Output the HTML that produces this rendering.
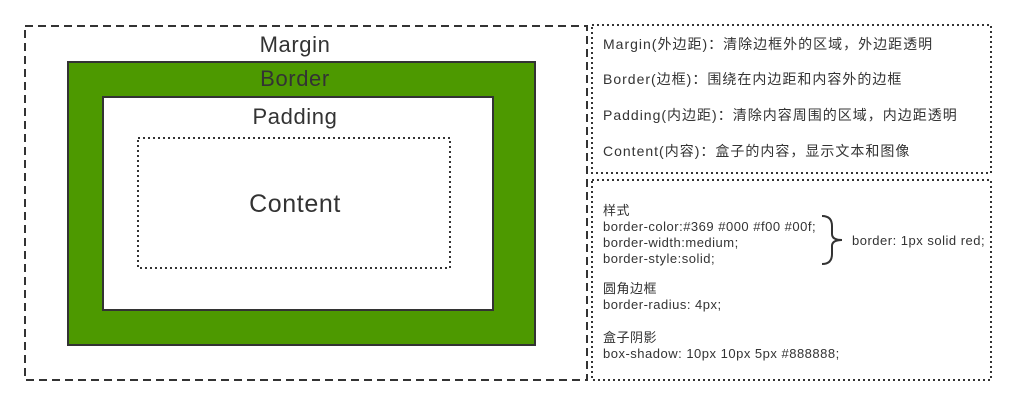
<!DOCTYPE html>
<html><head><meta charset="utf-8"><style>
html,body{margin:0;padding:0;background:#fff;width:1016px;height:406px;overflow:hidden}
text{font-family:"Liberation Sans","Noto Sans CJK SC",sans-serif;fill:#333}
</style></head><body>
<svg width="1016" height="406" viewBox="0 0 1016 406" xmlns="http://www.w3.org/2000/svg">
<rect x="25" y="26" width="562" height="354" fill="none" stroke="#333" stroke-width="2" stroke-dasharray="8 5"/>
<rect x="68" y="62" width="467" height="283" fill="#4d9900" stroke="#333" stroke-width="2"/>
<rect x="103" y="97" width="390" height="213" fill="#fff" stroke="#333" stroke-width="2"/>
<rect x="138" y="138" width="312" height="130" fill="none" stroke="#333" stroke-width="2" stroke-dasharray="2 3"/>
<text x="295" y="52" font-size="22" letter-spacing="0.6" text-anchor="middle">Margin</text>
<text x="295" y="86" font-size="22" letter-spacing="0.6" text-anchor="middle">Border</text>
<text x="295" y="124" font-size="22" letter-spacing="0.6" text-anchor="middle">Padding</text>
<text x="295" y="212" font-size="25" letter-spacing="0.6" text-anchor="middle">Content</text>
<rect x="592" y="25" width="399" height="148" fill="none" stroke="#333" stroke-width="2" stroke-dasharray="2 3"/>
<rect x="592" y="180" width="399" height="200" fill="none" stroke="#333" stroke-width="2" stroke-dasharray="2 3"/>
<g font-size="14" letter-spacing="1">
<text x="603" y="49">Margin(外边距)：清除边框外的区域，外边距透明</text>
<text x="603" y="84">Border(边框)：围绕在内边距和内容外的边框</text>
<text x="603" y="120">Padding(内边距)：清除内容周围的区域，内边距透明</text>
<text x="603" y="156">Content(内容)：盒子的内容，显示文本和图像</text>
</g>
<g font-size="13" letter-spacing="0.5">
<text x="603" y="215">样式</text>
<text x="603" y="231">border-color:#369 #000 #f00 #00f;</text>
<text x="603" y="247">border-width:medium;</text>
<text x="603" y="263">border-style:solid;</text>
<text x="603" y="293">圆角边框</text>
<text x="603" y="309">border-radius: 4px;</text>
<text x="603" y="342">盒子阴影</text>
<text x="603" y="358">box-shadow: 10px 10px 5px #888888;</text>
<text x="852" y="245">border: 1px solid red;</text>
</g>
<path d="M822 216 Q832 216 832 226 L832 234 Q832 240 842 240 Q832 240 832 246 L832 254 Q832 264 822 264" fill="none" stroke="#333" stroke-width="2"/>
</svg>
</body></html>
